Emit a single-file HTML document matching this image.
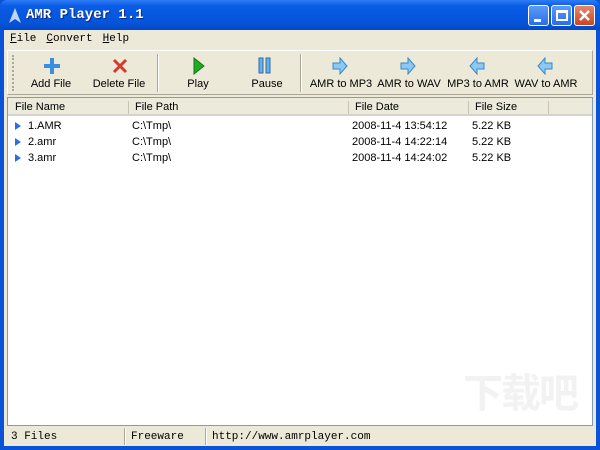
<!DOCTYPE html>
<html><head><style>
*{margin:0;padding:0;box-sizing:border-box}
html{overflow:hidden;width:600px;height:450px}
body{width:600px;height:450px;overflow:hidden;background:#0a53d8;font-family:"Liberation Sans",sans-serif;font-size:11px;position:relative}
.title{position:absolute;left:0;top:0;width:600px;height:30px;background:linear-gradient(#2e7cf4,#0a5ce6 20%,#0553d8 80%,#0448c4);border-radius:7px 7px 0 0}
.title .t{position:absolute;left:26px;top:7px;color:#fff;font-family:"Liberation Mono",monospace;font-weight:bold;font-size:14px;text-shadow:1px 1px #0a2a80}
.btn{position:absolute;top:5px;width:21px;height:21px;border:1px solid #fff;border-radius:3px;background:linear-gradient(#5c9af8,#2a6ee8)}
.x{background:linear-gradient(#e8866a,#c9461e)}
.win{position:absolute;left:4px;top:30px;width:592px;height:416px;background:#ece9d8;overflow:hidden}
.menu{position:absolute;left:6px;top:3px;font-family:"Liberation Mono",monospace;font-size:11px;color:#000}
.menu span{margin-right:10px}
.tb{position:absolute;left:3px;top:20px;width:586px;height:45px;border:1px solid #fff;border-right-color:#aca899;border-bottom-color:#aca899;background:#ece9d8}
.tbi{position:absolute;top:27px;width:70px;text-align:center;color:#000;font-size:11px;white-space:nowrap}
.ic{position:absolute;top:6px}
.sep{position:absolute;top:3px;width:2px;height:38px;border-left:1px solid #aca899;border-right:1px solid #fff}
.list{position:absolute;left:3px;top:67px;width:586px;height:329px;background:#fff;border:1px solid #7f9db9;overflow:hidden}
.hdr{position:absolute;left:0;top:0;width:584px;height:18px;background:#ebeadb;border-bottom:2px solid #d6d3ce}
.hdr span{position:absolute;top:3px}
.hs{position:absolute;top:3px;width:1px;height:13px;background:#c7c5b2}
.row{position:absolute;left:0;height:16px;width:584px}
.row span{position:absolute;top:2px}
.ar{position:absolute;left:7px;top:4px;width:0;height:0;border-left:6px solid #2a6ee0;border-top:4px solid transparent;border-bottom:4px solid transparent}
.status{position:absolute;left:3px;top:397px;width:586px;height:19px;font-family:"Liberation Mono",monospace;font-size:11px}
.status span{position:absolute;top:4px;white-space:nowrap}
.ss{position:absolute;top:1px;width:2px;height:17px;border-left:1px solid #aca899;border-right:1px solid #fff}
</style></head><body>
<div class="title">
<svg style="position:absolute;left:8px;top:8px" width="14" height="16"><path d="M7 0 L13 15 L7 11 L1 15Z" fill="#bcd6ff"/></svg>
<div class="t">AMR Player 1.1</div>
<div class="btn" style="left:528px"><div style="position:absolute;left:5px;top:13px;width:7px;height:3px;background:#fff"></div></div>
<div class="btn" style="left:551px"><div style="position:absolute;left:4px;top:4px;width:12px;height:11px;border:2px solid #fff;border-top-width:3px"></div></div>
<div class="btn x" style="left:574px"><svg width="19" height="19"><path d="M5 5L14 14M14 5L5 14" stroke="#fff" stroke-width="2.5"/></svg></div>
</div>
<div class="win">
<div class="menu"><span><u>F</u>ile</span><span><u>C</u>onvert</span><span><u>H</u>elp</span></div>
<div class="tb">
<div style="position:absolute;left:4px;top:4px;width:2px;height:36px;border-left:2px dotted #aca899"></div>
<div class="tbi" style="left:8px">Add File</div>
<svg class="ic" style="left:35px" width="18" height="18"><path d="M9 1V17M1 9H17" stroke="#3a8ee0" stroke-width="4"/></svg>
<div class="tbi" style="left:76px">Delete File</div>
<svg class="ic" style="left:103px" width="18" height="18"><path d="M3 3L15 15M15 3L3 15" stroke="#d23a2a" stroke-width="3"/></svg>
<div class="sep" style="left:149px"></div>
<div class="tbi" style="left:155px">Play</div>
<svg class="ic" style="left:184px" width="14" height="18"><path d="M2 1L12 9L2 17Z" fill="#22aa22" stroke="#117711"/></svg>
<div class="tbi" style="left:224px">Pause</div>
<svg class="ic" style="left:250px" width="14" height="18"><rect x="1" y="1" width="4" height="15" fill="#6aaee8" stroke="#2a6ea8"/><rect x="8" y="1" width="4" height="15" fill="#6aaee8" stroke="#2a6ea8"/></svg>
<div class="sep" style="left:292px"></div>
<div class="tbi" style="left:298px">AMR to MP3</div>
<div class="tbi" style="left:366px">AMR to WAV</div>
<div class="tbi" style="left:435px">MP3 to AMR</div>
<div class="tbi" style="left:503px">WAV to AMR</div>
<svg class="ic" style="left:324px" width="16" height="18"><path d="M1 6H8V1L15 9L8 17V12H1Z" fill="#8cc8f0" stroke="#3a88c8"/></svg>
<svg class="ic" style="left:392px" width="16" height="18"><path d="M1 6H8V1L15 9L8 17V12H1Z" fill="#8cc8f0" stroke="#3a88c8"/></svg>
<svg class="ic" style="left:461px" width="16" height="18"><path d="M15 6H8V1L1 9L8 17V12H15Z" fill="#8cc8f0" stroke="#3a88c8"/></svg>
<svg class="ic" style="left:529px" width="16" height="18"><path d="M15 6H8V1L1 9L8 17V12H15Z" fill="#8cc8f0" stroke="#3a88c8"/></svg>
</div>
<div class="list">
<div class="hdr"><span style="left:7px">File Name</span><div class="hs" style="left:120px"></div><span style="left:127px">File Path</span><div class="hs" style="left:340px"></div><span style="left:347px">File Date</span><div class="hs" style="left:460px"></div><span style="left:467px">File Size</span><div class="hs" style="left:540px"></div></div>
<div class="row" style="top:20px"><div class="ar"></div><span style="left:20px">1.AMR</span><span style="left:124px">C:\Tmp\</span><span style="left:344px">2008-11-4 13:54:12</span><span style="left:464px">5.22 KB</span></div>
<div class="row" style="top:36px"><div class="ar"></div><span style="left:20px">2.amr</span><span style="left:124px">C:\Tmp\</span><span style="left:344px">2008-11-4 14:22:14</span><span style="left:464px">5.22 KB</span></div>
<div class="row" style="top:52px"><div class="ar"></div><span style="left:20px">3.amr</span><span style="left:124px">C:\Tmp\</span><span style="left:344px">2008-11-4 14:24:02</span><span style="left:464px">5.22 KB</span></div>
<div style="position:absolute;left:455px;top:268px;white-space:nowrap;font-family:'Noto Sans CJK SC',sans-serif;font-size:40px;line-height:48px;color:#f2f2f2;font-weight:bold;letter-spacing:-2px">下载吧</div>
</div>
<div class="status"><span style="left:4px">3 Files</span><div class="ss" style="left:117px"></div><span style="left:124px">Freeware</span><div class="ss" style="left:198px"></div><span style="left:205px">http://www.amrplayer.com</span></div>
</div>
</body></html>
